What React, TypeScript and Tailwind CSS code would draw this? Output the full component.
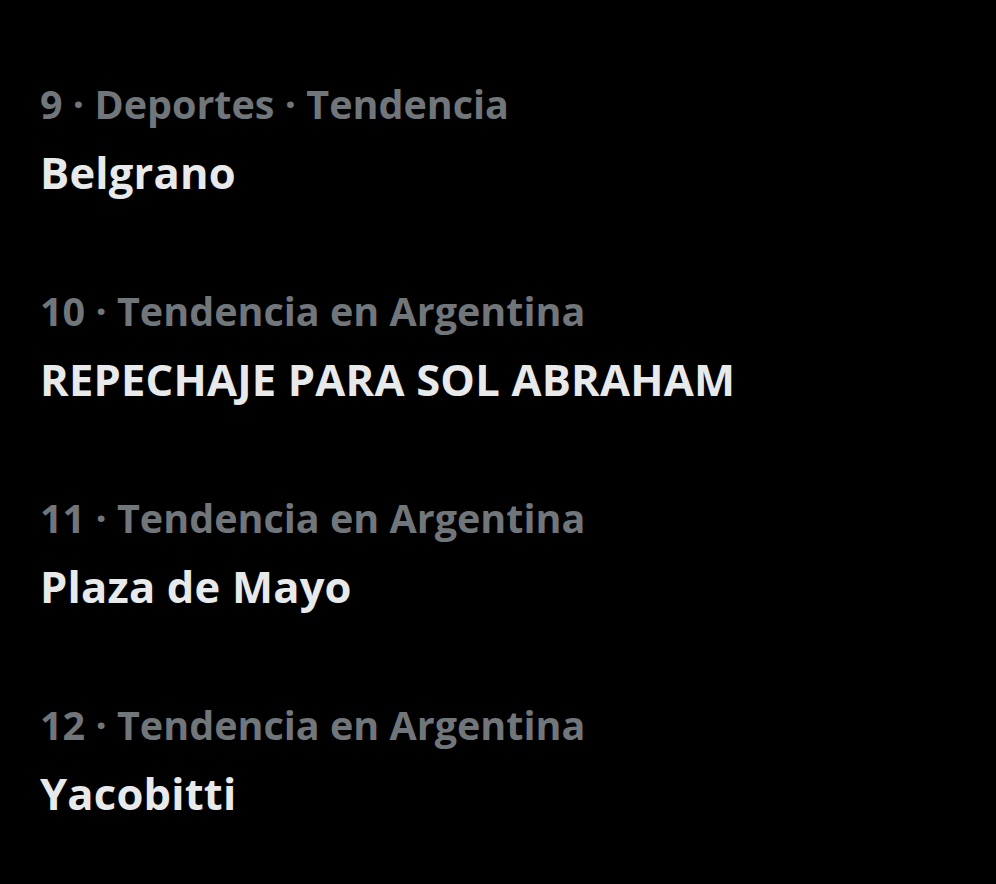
import React from 'react';

type Trend = { rank: number; context: string; name: string };

const trends: Trend[] = [
  { rank: 9, context: 'Deportes · Tendencia', name: 'Belgrano' },
  { rank: 10, context: 'Tendencia en Argentina', name: 'REPECHAJE PARA SOL ABRAHAM' },
  { rank: 11, context: 'Tendencia en Argentina', name: 'Plaza de Mayo' },
  { rank: 12, context: 'Tendencia en Argentina', name: 'Yacobitti' },
];

function TrendRow({ rank, context, name }: Trend) {
  return (
    <div className="flex flex-col h-[207px]">
      <span className="text-[39.5px] leading-[48px] font-bold text-[#71767b]">
        {rank} · {context}
      </span>
      <span className="mt-[21px] text-[43.5px] leading-[48px] font-bold tracking-[0.2px] text-[#e7e9ea]">
        {name}
      </span>
    </div>
  );
}

export default function App() {
  return (
    <div
      className="w-[996px] h-[884px] bg-black pl-[40px] pt-[80px] overflow-hidden"
      style={{ fontFamily: '"Open Sans", Inter, sans-serif' }}
    >
      {trends.map((t) => (
        <TrendRow key={t.rank} {...t} />
      ))}
    </div>
  );
}
